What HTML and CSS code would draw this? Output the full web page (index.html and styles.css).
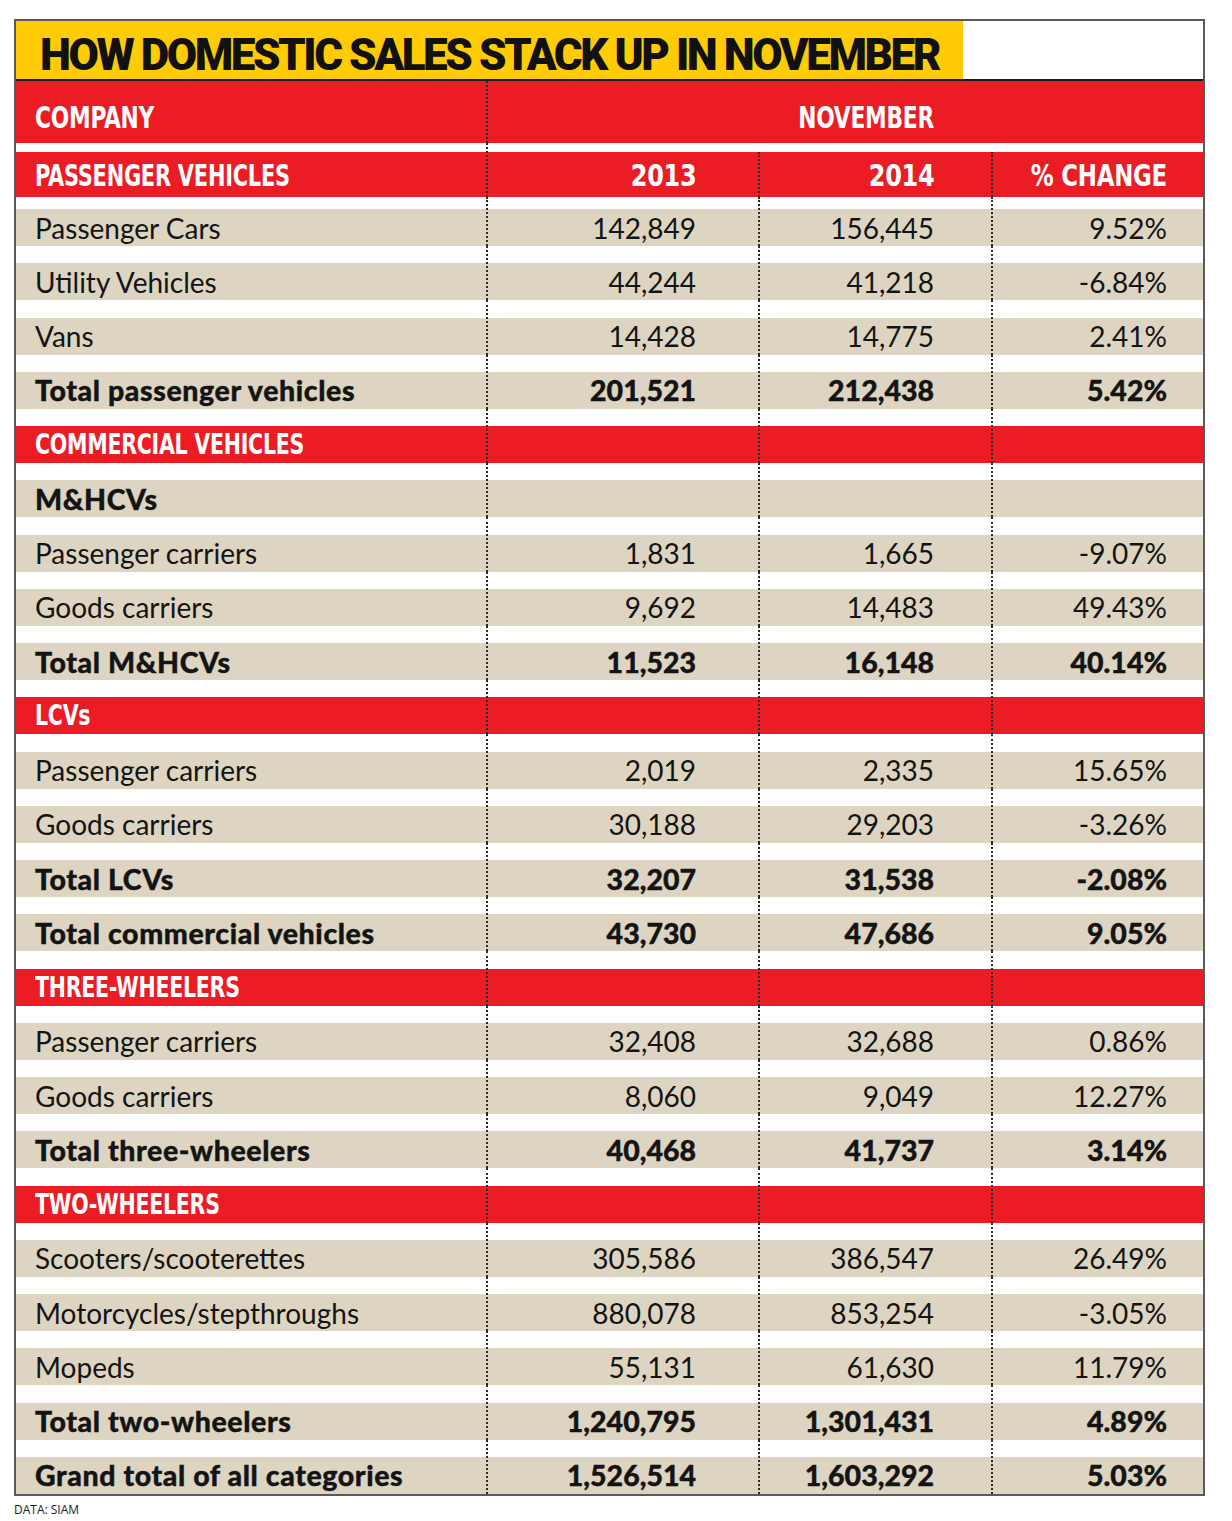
FILE: index.html
```html
<!DOCTYPE html>
<html lang="en">
<head>
<meta charset="utf-8">
<title>How domestic sales stack up in November</title>
<link rel="stylesheet" href="styles.css">
</head>
<body>
<div class="page">
  <div class="frame">
    <div class="titlebar">
      <h1 class="title">HOW DOMESTIC SALES STACK UP IN NOVEMBER</h1>
    </div>

    <div class="row head1">
      <div class="cell c1"><span class="lbl">COMPANY</span></div>
      <div class="cell c234 sep"><span class="lbl">NOVEMBER</span></div>
    </div>
    <div class="row head2">
      <div class="cell c1"><span class="lbl long">PASSENGER VEHICLES</span></div>
      <div class="cell c2 sep"><span class="lbl">2013</span></div>
      <div class="cell c3 sep noup"><span class="lbl">2014</span></div>
      <div class="cell c4 sep noup"><span class="lbl">% CHANGE</span></div>
    </div>

    <div class="row body first">
      <div class="cell c1">Passenger Cars</div>
      <div class="cell c2 sep">142,849</div>
      <div class="cell c3 sep">156,445</div>
      <div class="cell c4 sep">9.52%</div>
    </div>
    <div class="row body">
      <div class="cell c1">Utility Vehicles</div>
      <div class="cell c2 sep">44,244</div>
      <div class="cell c3 sep">41,218</div>
      <div class="cell c4 sep">-6.84%</div>
    </div>
    <div class="row body">
      <div class="cell c1">Vans</div>
      <div class="cell c2 sep">14,428</div>
      <div class="cell c3 sep">14,775</div>
      <div class="cell c4 sep">2.41%</div>
    </div>
    <div class="row body bold">
      <div class="cell c1">Total passenger vehicles</div>
      <div class="cell c2 sep">201,521</div>
      <div class="cell c3 sep">212,438</div>
      <div class="cell c4 sep">5.42%</div>
    </div>
    <div class="row section">
      <div class="cell c1"><span class="lbl">COMMERCIAL VEHICLES</span></div>
      <div class="cell c2 sep"></div>
      <div class="cell c3 sep"></div>
      <div class="cell c4 sep"></div>
    </div>
    <div class="row body bold">
      <div class="cell c1">M&amp;HCVs</div>
      <div class="cell c2 sep"></div>
      <div class="cell c3 sep"></div>
      <div class="cell c4 sep"></div>
    </div>
    <div class="row body">
      <div class="cell c1">Passenger carriers</div>
      <div class="cell c2 sep">1,831</div>
      <div class="cell c3 sep">1,665</div>
      <div class="cell c4 sep">-9.07%</div>
    </div>
    <div class="row body">
      <div class="cell c1">Goods carriers</div>
      <div class="cell c2 sep">9,692</div>
      <div class="cell c3 sep">14,483</div>
      <div class="cell c4 sep">49.43%</div>
    </div>
    <div class="row body bold">
      <div class="cell c1">Total M&amp;HCVs</div>
      <div class="cell c2 sep">11,523</div>
      <div class="cell c3 sep">16,148</div>
      <div class="cell c4 sep">40.14%</div>
    </div>
    <div class="row section">
      <div class="cell c1"><span class="lbl">LCVs</span></div>
      <div class="cell c2 sep"></div>
      <div class="cell c3 sep"></div>
      <div class="cell c4 sep"></div>
    </div>
    <div class="row body">
      <div class="cell c1">Passenger carriers</div>
      <div class="cell c2 sep">2,019</div>
      <div class="cell c3 sep">2,335</div>
      <div class="cell c4 sep">15.65%</div>
    </div>
    <div class="row body">
      <div class="cell c1">Goods carriers</div>
      <div class="cell c2 sep">30,188</div>
      <div class="cell c3 sep">29,203</div>
      <div class="cell c4 sep">-3.26%</div>
    </div>
    <div class="row body bold">
      <div class="cell c1">Total LCVs</div>
      <div class="cell c2 sep">32,207</div>
      <div class="cell c3 sep">31,538</div>
      <div class="cell c4 sep">-2.08%</div>
    </div>
    <div class="row body bold">
      <div class="cell c1">Total commercial vehicles</div>
      <div class="cell c2 sep">43,730</div>
      <div class="cell c3 sep">47,686</div>
      <div class="cell c4 sep">9.05%</div>
    </div>
    <div class="row section">
      <div class="cell c1"><span class="lbl">THREE-WHEELERS</span></div>
      <div class="cell c2 sep"></div>
      <div class="cell c3 sep"></div>
      <div class="cell c4 sep"></div>
    </div>
    <div class="row body">
      <div class="cell c1">Passenger carriers</div>
      <div class="cell c2 sep">32,408</div>
      <div class="cell c3 sep">32,688</div>
      <div class="cell c4 sep">0.86%</div>
    </div>
    <div class="row body">
      <div class="cell c1">Goods carriers</div>
      <div class="cell c2 sep">8,060</div>
      <div class="cell c3 sep">9,049</div>
      <div class="cell c4 sep">12.27%</div>
    </div>
    <div class="row body bold">
      <div class="cell c1">Total three-wheelers</div>
      <div class="cell c2 sep">40,468</div>
      <div class="cell c3 sep">41,737</div>
      <div class="cell c4 sep">3.14%</div>
    </div>
    <div class="row section">
      <div class="cell c1"><span class="lbl">TWO-WHEELERS</span></div>
      <div class="cell c2 sep"></div>
      <div class="cell c3 sep"></div>
      <div class="cell c4 sep"></div>
    </div>
    <div class="row body">
      <div class="cell c1">Scooters/scooterettes</div>
      <div class="cell c2 sep">305,586</div>
      <div class="cell c3 sep">386,547</div>
      <div class="cell c4 sep">26.49%</div>
    </div>
    <div class="row body">
      <div class="cell c1">Motorcycles/stepthroughs</div>
      <div class="cell c2 sep">880,078</div>
      <div class="cell c3 sep">853,254</div>
      <div class="cell c4 sep">-3.05%</div>
    </div>
    <div class="row body">
      <div class="cell c1">Mopeds</div>
      <div class="cell c2 sep">55,131</div>
      <div class="cell c3 sep">61,630</div>
      <div class="cell c4 sep">11.79%</div>
    </div>
    <div class="row body bold">
      <div class="cell c1">Total two-wheelers</div>
      <div class="cell c2 sep">1,240,795</div>
      <div class="cell c3 sep">1,301,431</div>
      <div class="cell c4 sep">4.89%</div>
    </div>
    <div class="row body bold">
      <div class="cell c1">Grand total of all categories</div>
      <div class="cell c2 sep">1,526,514</div>
      <div class="cell c3 sep">1,603,292</div>
      <div class="cell c4 sep">5.03%</div>
    </div>
  </div>
  <p class="source">DATA: SIAM</p>
</div>
</body>
</html>
```

FILE: styles.css
```css
* { box-sizing: border-box; }

body {
  margin: 0;
  background: #ffffff;
  font-family: Lato, "Open Sans", sans-serif;
  color: #141414;
}

.page {
  width: 1232px;
  padding: 19px 0 0 14px;
}

.frame {
  width: 1191px;
  border: 2px solid #5a5a5a;
  background: #ffffff;
}

/* ---------- title ---------- */
.titlebar {
  display: flex;
  height: 60px;
  border-bottom: 2px solid #1a1a1a;
}

.title {
  margin: 0;
  height: 58px;
  display: flex;
  align-items: center;
  padding: 9px 24px 0 24px;
  background: #ffcb05;
  font-family: Roboto, "Liberation Sans", sans-serif;
  font-weight: 900;
  font-size: 44px;
  letter-spacing: -2.45px;
  word-spacing: 0;
  color: #111111;
  white-space: nowrap;
}

/* ---------- rows ---------- */
.row {
  --gap: 17.25px;
  display: flex;
  margin-top: var(--gap);
}

.cell {
  position: relative;
  display: flex;
  align-items: center;
  white-space: nowrap;
}

.sep::before {
  content: "";
  position: absolute;
  left: -1px;
  top: calc(-1 * var(--gap));
  bottom: 0;
  border-left: 2px dotted #2a2a2a;
}

.sep.noup::before { top: 0; }

.c1 { width: 471px; padding-left: 19px; }
.c2 { width: 272px; justify-content: flex-end; padding-right: 63px; }
.c3 { width: 233px; justify-content: flex-end; padding-right: 58px; }
.c4 { width: 211px; justify-content: flex-end; padding-right: 36px; }
.c234 { width: 716px; justify-content: flex-end; padding-right: 269px; }

/* condensed display labels */
.lbl {
  display: inline-block;
  transform-origin: left center;
}

.c2 .lbl,
.c3 .lbl,
.c4 .lbl,
.c234 .lbl { transform-origin: right center; }

/* header rows */
.head1,
.head2 {
  background: #ec1c24;
  color: #ffffff;
  font-family: "DejaVu Sans Condensed", "DejaVu Sans", sans-serif;
  font-stretch: condensed;
  font-weight: 700;
  font-size: 31px;
  letter-spacing: -0.3px;
}

.head1 .lbl,
.head2 .lbl { transform: scaleX(0.78); }

.head2 .lbl.long { transform: scaleX(0.75); }

.head2 .c2 .lbl,
.head2 .c3 .lbl { transform: scaleX(0.86); }

.head2 .c4 .lbl { transform: scaleX(0.82); }

.head1 {
  --gap: 0px;
  height: 62px;
}

.head1 .cell { padding-top: 9px; }

.head2 {
  --gap: 9px;
  height: 45px;
}

/* body rows */
.body {
  height: 37px;
  background: #ddd5c1;
  font-size: 28px;
  font-weight: 400;
}

.body .cell { padding-top: 0; }

.body.first { --gap: 12px; }

.bold {
  font-weight: 900;
  font-size: 28.5px;
  -webkit-text-stroke: 0.4px #141414;
}

.bold .c1 { letter-spacing: 0.6px; }

.section {
  height: 37px;
  background: #ec1c24;
  color: #ffffff;
  font-family: "DejaVu Sans Condensed", "DejaVu Sans", sans-serif;
  font-stretch: condensed;
  font-weight: 700;
  font-size: 28px;
  letter-spacing: -0.3px;
}

.section .lbl { transform: scaleX(0.815); }

/* footer */
.source {
  margin: 6px 0 0 0;
  font-family: "Open Sans", Lato, sans-serif;
  font-size: 12px;
  line-height: 16px;
  color: #1a1a1a;
}
```
